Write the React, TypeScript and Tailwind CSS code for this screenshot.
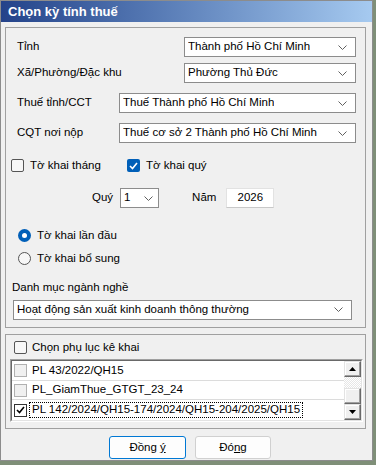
import React from "react";

const Chevron = () => (
  <svg width="9" height="5" viewBox="0 0 9 5" className="shrink-0">
    <polyline points="0.5,0.5 4.5,4.5 8.5,0.5" fill="none" stroke="#606060" strokeWidth="1" />
  </svg>
);

function Combo({ text, w, className = "" }: { text: string; w: string; className?: string }) {
  return (
    <div
      className={`${w} h-[20px] bg-white border border-[#8c8c8c] flex items-center justify-between pl-[3px] pr-[8px] ${className}`}
    >
      <span className="truncate">{text}</span>
      <Chevron />
    </div>
  );
}

const Check = ({ color = "white" }: { color?: string }) => (
  <svg width="9" height="8" viewBox="0 0 9 8">
    <polyline points="1,4 3.5,6.5 8,1" fill="none" stroke={color} strokeWidth="1.6" />
  </svg>
);

function WinCheckbox({ checked = false }: { checked?: boolean }) {
  return checked ? (
    <div className="w-[13px] h-[13px] rounded-[2px] bg-[#005fb8] flex items-center justify-center shrink-0">
      <Check />
    </div>
  ) : (
    <div className="w-[13px] h-[13px] rounded-[2px] border border-[#555] bg-[#f7f7f7] shrink-0" />
  );
}

function Radio({ checked = false }: { checked?: boolean }) {
  return checked ? (
    <div className="w-[13px] h-[13px] rounded-full bg-[#005fb8] flex items-center justify-center shrink-0">
      <div className="w-[5px] h-[5px] rounded-full bg-white" />
    </div>
  ) : (
    <div className="w-[13px] h-[13px] rounded-full border border-[#555] bg-[#f7f7f7] shrink-0" />
  );
}

function ListCheck({ checked = false }: { checked?: boolean }) {
  return (
    <div
      className={`w-[13px] h-[13px] border flex items-center justify-center shrink-0 ${
        checked ? "bg-white border-[#333]" : "bg-[#f0f0f0] border-[#b0b0b0]"
      }`}
    >
      {checked && <Check color="#000" />}
    </div>
  );
}

function ScrollBtn({ up }: { up?: boolean }) {
  return (
    <div className="h-[16px] w-full bg-[#f0f0f0] border border-[#e3e3e3] border-r-[#696969] border-b-[#696969] shadow-[inset_-1px_-1px_#a0a0a0,inset_1px_1px_#fff] flex items-center justify-center">
      <svg width="7" height="4" viewBox="0 0 7 4">
        {up ? <polygon points="0,4 7,4 3.5,0" fill="#000" /> : <polygon points="0,0 7,0 3.5,4" fill="#000" />}
      </svg>
    </div>
  );
}

const rows = [
  { text: "PL 43/2022/QH15", checked: false },
  { text: "PL_GiamThue_GTGT_23_24", checked: false },
  { text: "PL 142/2024/QH15-174/2024/QH15-204/2025/QH15", checked: true },
];

export default function App() {
  return (
    <div className="w-[376px] h-[465px] bg-[#7f8f78] font-['Liberation_Sans',Arial,sans-serif] text-[11.5px] text-black leading-none">
      <div className="w-[373px] h-[461px] bg-[#f0f0f0] border border-[#8c8c8c] flex flex-col">
        {/* TITLE BAR */}
        <div className="h-[21px] bg-linear-to-r from-[#24438a] to-[#a6caf0] flex items-center pl-[7px]">
          <span className="text-white font-bold text-[13px]">Chọn kỳ tính thuế</span>
        </div>

        <div className="pl-[4px] pt-[5px]">
          {/* GROUP 1 */}
          <div className="w-[361px] h-[301px] border border-[#a0a0a0] flex flex-col">
            <div className="mt-[9px] flex items-center justify-between pl-[11px] pr-[9px]">
              <span>Tỉnh</span>
              <Combo w="w-[172px]" text="Thành phố Hồ Chí Minh" />
            </div>
            <div className="mt-[6px] flex items-center justify-between pl-[11px] pr-[9px]">
              <span>Xã/Phường/Đặc khu</span>
              <Combo w="w-[172px]" text="Phường Thủ Đức" />
            </div>
            <div className="mt-[10px] flex items-center justify-between pl-[11px] pr-[9px]">
              <span>Thuế tỉnh/CCT</span>
              <Combo w="w-[237px]" text="Thuế Thành phố Hồ Chí Minh" />
            </div>
            <div className="mt-[10px] flex items-center justify-between pl-[11px] pr-[9px]">
              <span>CQT nơi nộp</span>
              <Combo w="w-[237px]" text="Thuế cơ sở 2 Thành phố Hồ Chí Minh" />
            </div>

            <div className="mt-[16px] h-[13px] flex items-center pl-[5px]">
              <WinCheckbox />
              <span className="ml-[6px] w-[97px]">Tờ khai tháng</span>
              <WinCheckbox checked />
              <span className="ml-[6px]">Tờ khai quý</span>
            </div>

            <div className="mt-[16px] flex items-center pl-[86px]">
              <span>Quý</span>
              <div className="ml-[7px] w-[39px] h-[20px] bg-white border border-[#8c8c8c] flex items-center justify-between pl-[3px] pr-[5px]">
                <span>1</span>
                <Chevron />
              </div>
              <span className="ml-[33px]">Năm</span>
              <div className="ml-[10px] w-[48px] h-[20px] bg-white border border-[#e2e2e2] border-b-[#c8c8c8] flex items-center justify-center">
                2026
              </div>
            </div>

            <div className="mt-[21px] h-[13px] flex items-center pl-[12px]">
              <Radio checked />
              <span className="ml-[6px]">Tờ khai lần đầu</span>
            </div>
            <div className="mt-[10px] h-[13px] flex items-center pl-[12px]">
              <Radio />
              <span className="ml-[6px]">Tờ khai bổ sung</span>
            </div>

            <div className="mt-[17px] pl-[6px]">Danh mục ngành nghề</div>
            <div className="mt-[6px] pl-[7px]">
              <Combo w="w-[339px]" text="Hoạt động sản xuất kinh doanh thông thường" />
            </div>
          </div>

          {/* GROUP 2 */}
          <div className="mt-[6px] w-[361px] h-[95px] border border-[#a0a0a0] flex flex-col">
            <div className="mt-[6px] h-[13px] flex items-center pl-[8px]">
              <WinCheckbox />
              <span className="ml-[5px]">Chọn phụ lục kê khai</span>
            </div>
            <div className="mt-[5px] ml-[4px] w-[353px] h-[63px] border border-[#a0a0a0] border-r-white border-b-white">
              <div className="w-full h-full border border-[#696969] border-r-[#e3e3e3] border-b-[#e3e3e3] bg-white flex">
                <div className="flex-1 flex flex-col">
                  {rows.map((r, i) => (
                    <div
                      key={r.text}
                      className={`h-[20px] flex items-center pl-[2px] ${i < 2 ? "border-b border-[#dcdcdc]" : ""}`}
                    >
                      <ListCheck checked={r.checked} />
                      <span
                        className={`ml-[3px] px-[2px] h-[14px] flex items-center ${
                          r.checked ? "outline-1 outline-dotted outline-black" : ""
                        }`}
                      >
                        {r.text}
                      </span>
                    </div>
                  ))}
                </div>
                <div className="w-[17px] flex flex-col">
                  <ScrollBtn up />
                  <div className="h-[11px] bg-[repeating-conic-gradient(#ffffff_0_25%,#e6e6e6_0_50%)] bg-size-[2px_2px]" />
                  <div className="h-[17px] bg-[#f0f0f0] border border-[#e3e3e3] border-r-[#696969] border-b-[#696969] shadow-[inset_-1px_-1px_#a0a0a0,inset_1px_1px_#fff]" />
                  <ScrollBtn />
                </div>
              </div>
            </div>
          </div>

          {/* BUTTONS */}
          <div className="mt-[7px] flex pl-[104px] gap-[9px]">
            <button className="w-[77px] h-[23px] rounded-[3px] bg-[#fdfdfd] border border-[#0078d4] flex items-center justify-center">
              Đồng <span className="underline ml-[3px]">ý</span>
            </button>
            <button className="w-[76px] h-[23px] rounded-[3px] bg-[#fdfdfd] border border-[#d0d0d0] flex items-center justify-center">
              Đó<span className="underline">n</span>g
            </button>
          </div>
        </div>
      </div>
    </div>
  );
}
